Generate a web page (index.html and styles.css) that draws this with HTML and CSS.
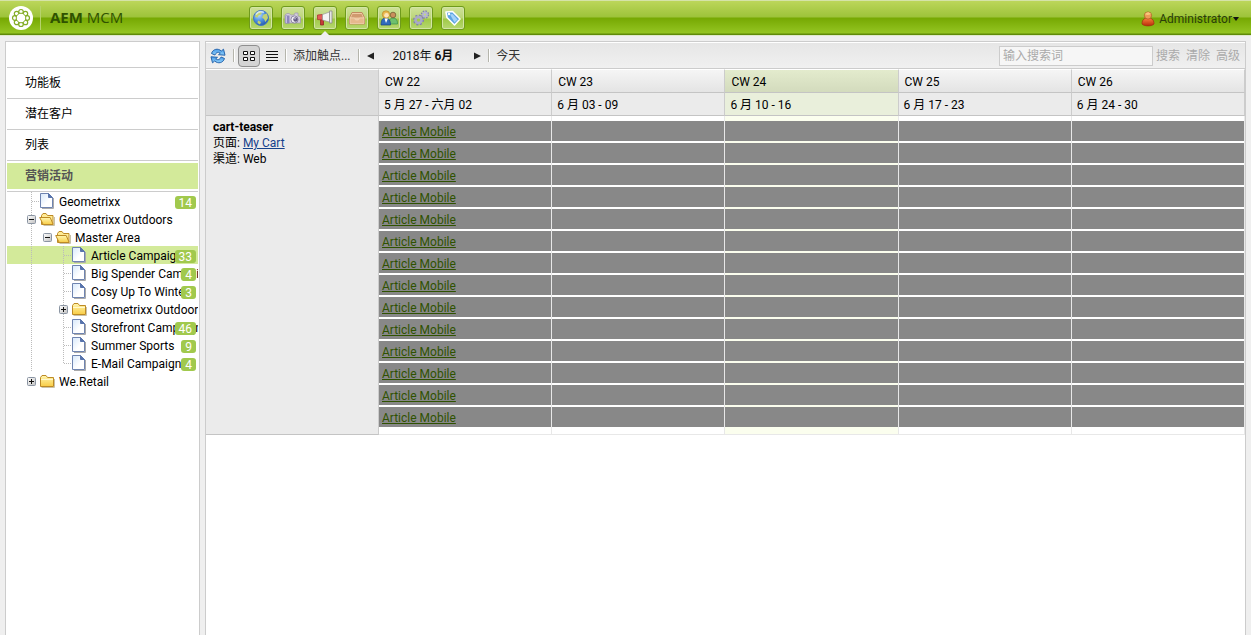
FILE: index.html
```html
<!DOCTYPE html>
<html lang="zh-CN">
<head>
<meta charset="utf-8">
<title>AEM MCM</title>
<link rel="stylesheet" href="styles.css">
</head>
<body>
<svg class="defs" aria-hidden="true">
  <defs>
    <linearGradient id="g-page" x1="0" y1="0" x2="1" y2="1"><stop offset="0" stop-color="#d6e8fb"/><stop offset=".6" stop-color="#fff"/></linearGradient>
    <linearGradient id="g-folder" x1="0" y1="0" x2="0" y2="1"><stop offset="0" stop-color="#fff6b0"/><stop offset="1" stop-color="#f8cc45"/></linearGradient>
    <radialGradient id="g-globe" cx=".35" cy=".3" r=".8"><stop offset="0" stop-color="#b9dcff"/><stop offset=".5" stop-color="#4d91e0"/><stop offset="1" stop-color="#1d4fa4"/></radialGradient>
    <linearGradient id="g-user" x1="0" y1="0" x2="0" y2="1"><stop offset="0" stop-color="#f8843c"/><stop offset="1" stop-color="#b92b0b"/></linearGradient>
    <linearGradient id="g-box" x1="0" y1="0" x2="1" y2="1"><stop offset="0" stop-color="#fff"/><stop offset="1" stop-color="#c0c0c0"/></linearGradient>
    <linearGradient id="g-arrow" x1="0" y1="0" x2="0" y2="1"><stop offset="0" stop-color="#4a9be8"/><stop offset="1" stop-color="#8fd0fa"/></linearGradient>
    <symbol id="page" viewBox="0 0 16 18">
      <path d="M3 16.500h11.500V6" fill="none" stroke="#aaa" stroke-width="1"/>
      <path d="M1.500 1.500h8l4 4v10h-12z" fill="url(#g-page)" stroke="#6f84b0"/>
      <path d="M9.500 1.500v4h4z" fill="#5874ac" stroke="#5874ac"/>
    </symbol>
    <symbol id="folder" viewBox="0 0 16 18">
      <path d="M1.500 14.500V5.500l1.500-2h4l1.500 2h6v9z" fill="url(#g-folder)" stroke="#bd8a25"/>
      <path d="M2 7.500h12" stroke="#fff8cf"/>
      <path d="M2.500 15.500h13V7" fill="none" stroke="#c9c2a8"/>
    </symbol>
    <symbol id="folder-open" viewBox="0 0 16 18">
      <path d="M2.500 14.500V5.500l1.500-2h3l1.500 2h5.500v9z" fill="#ffeb95" stroke="#bd8a25"/>
      <path d="M.700 7.500h10.500l3 7h-10z" fill="url(#g-folder)" stroke="#bd8a25"/>
      <path d="M15.500 7v8.500h-11" fill="none" stroke="#c9c2a8"/>
    </symbol>
    <symbol id="minus" viewBox="0 0 9 9"><rect x=".5" y=".5" width="8" height="8" rx="1" fill="url(#g-box)" stroke="#8b95a3"/><path d="M2 4.500h5" stroke="#111"/></symbol>
    <symbol id="plus" viewBox="0 0 9 9"><rect x=".5" y=".5" width="8" height="8" rx="1" fill="url(#g-box)" stroke="#8b95a3"/><path d="M2 4.500h5M4.500 2v5" stroke="#111"/></symbol>
  </defs>
</svg>

<header class="topbar">
  <a class="logo" href="#" aria-label="AEM">
    <svg width="24" height="24" viewBox="0 0 24 24">
      <circle cx="12" cy="12" r="12" fill="#fff"/>
      <g fill="none" stroke="#83ad25" stroke-width="1.200">
        <circle cx="12" cy="5.800" r="2.300"/><circle cx="16.400" cy="7.600" r="2.300"/><circle cx="18.200" cy="12" r="2.300"/><circle cx="16.400" cy="16.400" r="2.300"/>
        <circle cx="12" cy="18.200" r="2.300"/><circle cx="7.600" cy="16.400" r="2.300"/><circle cx="5.800" cy="12" r="2.300"/><circle cx="7.600" cy="7.600" r="2.300"/>
      </g>
      <circle cx="12" cy="12" r="4.800" fill="#fff" stroke="#83ad25"/>
    </svg>
  </a>
  <h1 class="brand"><b>AEM</b> MCM</h1>
  <nav class="apps">
    <button class="app" aria-label="网站"><svg width="18" height="18" viewBox="0 0 18 18"><circle cx="9" cy="9" r="7.500" fill="url(#g-globe)" stroke="#4577bd"/><path d="M4 5l3-2.500 3 .5-1 2.500-2.500 1-1 2L3 8zM11.500 5.500l3.500-1 1 4.500-2.500 4-1.500-3-2-1.500zM6 11.500l3 1.500-1 2.500-2.500-1.500z" fill="#c2d271"/><path d="M4 5.500c2-3 5-3.500 8-2" fill="none" stroke="#eaf5ff" stroke-width="1.500" opacity=".7"/></svg></button>
    <button class="app" aria-label="数字资产"><svg width="18" height="18" viewBox="0 0 18 18"><path d="M1 6l2-1.500h2L7 6h3l1-2h3v3l2.500 1v6H1z" fill="#d2ccda" stroke="#9d96b0" stroke-width=".7"/><path d="M1.500 6.500h4v8h-4z" fill="#8d85bd"/><path d="M2.500 7v7" stroke="#c4bfe2"/><circle cx="10.500" cy="10.500" r="3.600" fill="#f1eef5" stroke="#8e87a5"/><circle cx="11.500" cy="10.500" r="2.200" fill="#625a80"/><circle cx="11" cy="9.800" r=".8" fill="#c8c2e2"/></svg></button>
    <button class="app app-current" aria-label="营销活动"><svg width="18" height="18" viewBox="0 0 18 18"><path d="M4.500 9.500h3v6.500h-3z" fill="#c63a3a" stroke="#8b2020" stroke-width=".7"/><path d="M1.500 6l5-.5V11l-5-.5z" fill="#e35d58" stroke="#a52c2c" stroke-width=".7"/><path d="M6.500 5.500l7-2.500v10l-7-2z" fill="#f4f4f4" stroke="#999" stroke-width=".7"/><path d="M13.500 2h2.500v12h-2.500z" fill="#e3e3e3" stroke="#8b8b8b" stroke-width=".8"/></svg></button>
    <button class="app" aria-label="收件箱"><svg width="18" height="18" viewBox="0 0 18 18"><path d="M4 3.500h10l2.500 5v6.500h-15V8.500z" fill="#efc9a2" stroke="#c08a60"/><path d="M4.500 5h9l1.500 3.500H3z" fill="#d09a6f"/><path d="M2 9h4.500l1 2h3l1-2H16v5.500H2z" fill="#e6b88d" stroke="#f3d8bb" stroke-width=".6"/></svg></button>
    <button class="app" aria-label="用户"><svg width="18" height="18" viewBox="0 0 18 18"><path d="M9 15c0-4 1-6 4-6s4.500 2 4.500 5v1z" fill="#6ec06e" stroke="#3b9048" stroke-width=".7"/><circle cx="13" cy="6" r="2.800" fill="#c98f5c" stroke="#69552b" stroke-width=".7"/><path d="M1 16c0-5 1.500-7 4.500-7s5 2 5 7z" fill="#316bbd" stroke="#1b417d" stroke-width=".7"/><circle cx="6" cy="5.500" r="3.700" fill="#eab94e" stroke="#b88723" stroke-width=".7"/><circle cx="6.500" cy="6.300" r="2.300" fill="#fce3b8"/><path d="M4.500 9.500l1.500 4.500L8 9.500z" fill="#fff"/></svg></button>
    <button class="app" aria-label="工具"><svg width="18" height="18" viewBox="0 0 18 18" fill="none" stroke="#8383ac"><circle cx="6.500" cy="11" r="4.500" stroke-width="2" stroke-dasharray="2 1.500"/><circle cx="6.500" cy="11" r="3" stroke-width="2.500" stroke="#a9a9c9"/><circle cx="13" cy="5.500" r="3.200" stroke-width="2" stroke-dasharray="1.500 1"/><circle cx="13" cy="5.500" r="2" stroke-width="1.800" stroke="#b5b5d3"/></svg></button>
    <button class="app" aria-label="标记"><svg width="18" height="18" viewBox="0 0 18 18"><path d="M2 3l6.500-.5L16 10l-5.500 6L3 8.500z" fill="#5ba3e3" stroke="#fff" stroke-width="1.600" stroke-linejoin="round"/><path d="M6 5.500l2.500-.5 5 5.500-3 3z" fill="#a4d2f7"/><circle cx="5" cy="5" r="1.200" fill="#fff"/></svg></button>
  </nav>
  <button class="user">
    <svg width="14" height="16" viewBox="0 0 14 16"><path d="M1 13c0-5 3-6 6-6s6 1 6 6c-2 2.500-10 2.500-12 0z" fill="url(#g-user)" stroke="#9e2c10" stroke-width=".7"/><circle cx="7" cy="4.500" r="3.600" fill="#ed9c57" stroke="#ae5622" stroke-width=".7"/><path d="M4 3.500c1-2.500 4-3 6-.5-2 1.200-4 1-6 .5z" fill="#f8c77c"/></svg>
    <span>Administrator</span><svg width="6" height="4" viewBox="0 0 6 4"><path d="M0 0h6L3 4z" fill="#111"/></svg>
  </button>
</header>

<main class="workspace">
  <aside class="sidebar">
    <nav class="menu">
      <a class="menu-item" href="#">功能板</a>
      <a class="menu-item" href="#">潜在客户</a>
      <a class="menu-item" href="#">列表</a>
      <a class="menu-item menu-active" href="#"><span>营销活动</span></a>
    </nav>
    <ul class="tree">
      <li class="node"><i class="guide branch"></i><svg class="icon"><use href="#page"/></svg><a href="#">Geometrixx</a><span class="badge">14</span></li>
      <li class="node"><i class="guide line"><svg class="toggle"><use href="#minus"/></svg></i><svg class="icon"><use href="#folder-open"/></svg><a href="#">Geometrixx Outdoors</a></li>
      <li class="node"><i class="guide line"></i><i class="guide"><svg class="toggle"><use href="#minus"/></svg></i><svg class="icon"><use href="#folder-open"/></svg><a href="#">Master Area</a></li>
      <li class="node selected"><i class="guide line"></i><i class="guide"></i><i class="guide branch"></i><svg class="icon"><use href="#page"/></svg><a href="#">Article Campaigns</a><span class="badge">33</span></li>
      <li class="node"><i class="guide line"></i><i class="guide"></i><i class="guide branch"></i><svg class="icon"><use href="#page"/></svg><a href="#">Big Spender Campaign</a><span class="badge">4</span></li>
      <li class="node"><i class="guide line"></i><i class="guide"></i><i class="guide branch"></i><svg class="icon"><use href="#page"/></svg><a href="#">Cosy Up To Winter</a><span class="badge">3</span></li>
      <li class="node"><i class="guide line"></i><i class="guide"></i><i class="guide line"><svg class="toggle"><use href="#plus"/></svg></i><svg class="icon"><use href="#folder"/></svg><a href="#">Geometrixx Outdoors</a></li>
      <li class="node"><i class="guide line"></i><i class="guide"></i><i class="guide branch"></i><svg class="icon"><use href="#page"/></svg><a href="#">Storefront Campaigner</a><span class="badge">46</span></li>
      <li class="node"><i class="guide line"></i><i class="guide"></i><i class="guide branch"></i><svg class="icon"><use href="#page"/></svg><a href="#">Summer Sports</a><span class="badge">9</span></li>
      <li class="node"><i class="guide line"></i><i class="guide"></i><i class="guide branch end"></i><svg class="icon"><use href="#page"/></svg><a href="#">E-Mail Campaigns</a><span class="badge">4</span></li>
      <li class="node"><i class="guide"><svg class="toggle"><use href="#plus"/></svg></i><svg class="icon"><use href="#folder"/></svg><a href="#">We.Retail</a></li>
    </ul>
  </aside>

  <section class="content">
    <div class="toolbar">
      <button class="tool refresh" aria-label="刷新"><svg width="16" height="16" viewBox="0 0 16 16" stroke-linejoin="round"><path d="M1.500 5.500C3 .800 8 0 11.300 3L13.500 1.200l1.500 6-6.500-.5 1.800-1.600C8 3.500 6 4.500 5 7z" fill="url(#g-arrow)" stroke="#2564ad"/><path d="M14.500 10.500C13 15.200 8 16 4.700 13l-2.200 1.800L1 8.800l6.500.5-1.800 1.600C8 12.500 10 11.500 11 9z" fill="url(#g-arrow)" stroke="#2564ad"/></svg></button>
      <span class="sep"></span>
      <button class="tool pressed" aria-label="日历视图"><svg width="12" height="12" viewBox="0 0 12 12" fill="#fff" stroke="#111"><path d="M.5 1.500h4v3h-4zM7.500 1.500h4v3h-4zM.5 7.500h4v3h-4zM7.500 7.500h4v3h-4z"/></svg></button>
      <button class="tool list" aria-label="列表视图"><svg width="12" height="12" viewBox="0 0 12 12" stroke="#111"><path d="M0 1.500h12M0 4.500h12M0 7.500h12M0 10.500h12"/></svg></button>
      <span class="sep"></span>
      <button class="tool">添加触点...</button>
      <span class="sep"></span>
      <button class="tool arrow" aria-label="上一月"><svg width="7" height="8" viewBox="0 0 7 8"><path d="M7 .5v7L0 4z" fill="#222"/></svg></button>
      <span class="month">2018年 <b>6月</b></span>
      <button class="tool arrow" aria-label="下一月"><svg width="7" height="8" viewBox="0 0 7 8"><path d="M0 .5v7L7 4z" fill="#222"/></svg></button>
      <span class="sep"></span>
      <button class="tool">今天</button>
      <form class="search">
        <input type="text" placeholder="输入搜索词" aria-label="输入搜索词">
        <button type="button" disabled>搜索</button>
        <button type="button" disabled>清除</button>
        <button type="button" disabled>高级</button>
      </form>
    </div>

    <table class="calendar">
      <colgroup><col class="col-name"><col><col><col class="current"><col><col></colgroup>
      <thead>
        <tr class="weeks"><th class="corner" rowspan="2"></th><th>CW 22</th><th>CW 23</th><th class="now">CW 24</th><th>CW 25</th><th>CW 26</th></tr>
        <tr class="dates"><th>5 月 27 - 六月 02</th><th>6 月 03 - 09</th><th class="now">6 月 10 - 16</th><th>6 月 17 - 23</th><th>6 月 24 - 30</th></tr>
      </thead>
      <tbody>
        <tr>
          <th class="place" rowspan="14"><b>cart-teaser</b><br>页面: <a href="#">My Cart</a><br>渠道: Web</th>
          <td><div class="bar"><a href="#">Article Mobile</a></div></td><td><div class="bar"></div></td><td><div class="bar"></div></td><td><div class="bar"></div></td><td><div class="bar"></div></td>
        </tr>
        <tr><td><div class="bar"><a href="#">Article Mobile</a></div></td><td><div class="bar"></div></td><td><div class="bar"></div></td><td><div class="bar"></div></td><td><div class="bar"></div></td></tr>
        <tr><td><div class="bar"><a href="#">Article Mobile</a></div></td><td><div class="bar"></div></td><td><div class="bar"></div></td><td><div class="bar"></div></td><td><div class="bar"></div></td></tr>
        <tr><td><div class="bar"><a href="#">Article Mobile</a></div></td><td><div class="bar"></div></td><td><div class="bar"></div></td><td><div class="bar"></div></td><td><div class="bar"></div></td></tr>
        <tr><td><div class="bar"><a href="#">Article Mobile</a></div></td><td><div class="bar"></div></td><td><div class="bar"></div></td><td><div class="bar"></div></td><td><div class="bar"></div></td></tr>
        <tr><td><div class="bar"><a href="#">Article Mobile</a></div></td><td><div class="bar"></div></td><td><div class="bar"></div></td><td><div class="bar"></div></td><td><div class="bar"></div></td></tr>
        <tr><td><div class="bar"><a href="#">Article Mobile</a></div></td><td><div class="bar"></div></td><td><div class="bar"></div></td><td><div class="bar"></div></td><td><div class="bar"></div></td></tr>
        <tr><td><div class="bar"><a href="#">Article Mobile</a></div></td><td><div class="bar"></div></td><td><div class="bar"></div></td><td><div class="bar"></div></td><td><div class="bar"></div></td></tr>
        <tr><td><div class="bar"><a href="#">Article Mobile</a></div></td><td><div class="bar"></div></td><td><div class="bar"></div></td><td><div class="bar"></div></td><td><div class="bar"></div></td></tr>
        <tr><td><div class="bar"><a href="#">Article Mobile</a></div></td><td><div class="bar"></div></td><td><div class="bar"></div></td><td><div class="bar"></div></td><td><div class="bar"></div></td></tr>
        <tr><td><div class="bar"><a href="#">Article Mobile</a></div></td><td><div class="bar"></div></td><td><div class="bar"></div></td><td><div class="bar"></div></td><td><div class="bar"></div></td></tr>
        <tr><td><div class="bar"><a href="#">Article Mobile</a></div></td><td><div class="bar"></div></td><td><div class="bar"></div></td><td><div class="bar"></div></td><td><div class="bar"></div></td></tr>
        <tr><td><div class="bar"><a href="#">Article Mobile</a></div></td><td><div class="bar"></div></td><td><div class="bar"></div></td><td><div class="bar"></div></td><td><div class="bar"></div></td></tr>
        <tr><td><div class="bar"><a href="#">Article Mobile</a></div></td><td><div class="bar"></div></td><td><div class="bar"></div></td><td><div class="bar"></div></td><td><div class="bar"></div></td></tr>
      </tbody>
    </table>
  </section>
</main>
</body>
</html>
```
FILE: styles.css
```css
* { box-sizing: border-box; }

body {
  margin: 0;
  height: 100vh;
  display: flex;
  flex-direction: column;
  overflow: hidden;
  background: #efefef;
  color: #000;
  font: 12px/16px Roboto, "Noto Sans CJK SC", sans-serif;
}

button, input {
  margin: 0;
  padding: 0;
  border: 0;
  background: none;
  color: inherit;
  font: inherit;
}

a { color: inherit; text-decoration: none; }
svg { display: block; flex: none; }
.defs { position: absolute; width: 0; height: 0; }

/* Top bar */
.topbar {
  flex: none;
  display: flex;
  align-items: center;
  height: 36px;
  padding: 0 12px 0 9px;
  border-top: 1px solid #d5e3a8;
  border-bottom: 1px solid #dfe8cc;
  background: linear-gradient(#bcd65a 0, #9dc33a 16px, #76a802 17px, #94c522 32px, #5f8a08 33px, #5f8a08 34px);
}

.brand {
  width: 209px;
  height: 24px;
  margin: 0 0 0 7px;
  padding-left: 9px;
  border-left: 1px solid #b6d26c;
  color: #2f5200;
  font: 15px/22px "Open Sans", "Noto Sans", sans-serif;
}

.apps { display: flex; gap: 8px; flex: 1; }

.app {
  position: relative;
  display: flex;
  align-items: center;
  justify-content: center;
  width: 24px;
  height: 24px;
  border: 1px solid #6f9a1c;
  border-radius: 3px;
  background: linear-gradient(#cfe19a 0, #bcd679 11px, #a0c946 12px, #b7d873);
  box-shadow: inset 0 0 0 1px #d3e5a5;
}

.app-current::after {
  content: "";
  position: absolute;
  top: 24px;
  left: 6px;
  border: 5px solid transparent;
  border-top: 0;
  border-bottom-color: #efefef;
}

.user {
  display: flex;
  align-items: center;
  gap: 4px;
  padding-top: 2px;
  color: #2a3d0a;
}

.user span + svg { margin-left: -3px; }

/* Panels */
.workspace {
  flex: 1;
  display: flex;
  gap: 5px;
  min-height: 0;
  padding: 5px 5px 0;
}

.sidebar {
  flex: none;
  width: 195px;
  padding: 0 1px;
  border: 1px solid #ccc;
  border-bottom: 0;
  background: #fff;
}

.content {
  flex: 1;
  min-width: 0;
  border: 1px solid #ccc;
  border-bottom: 0;
  background: #fff;
}

/* Side menu */
.menu { padding-top: 25px; border-bottom: 1px solid #ccc; }

.menu-item {
  display: block;
  height: 31px;
  padding: 7px 18px;
  border-top: 1px solid #ccc;
}

.menu-active {
  padding: 2px 0;
  color: #555;
  font-weight: bold;
}

.menu-active span {
  display: block;
  height: 26px;
  padding: 5px 18px;
  background: #d3ea9a;
}

/* Campaign tree */
.tree { margin: 0; padding: 0; list-style: none; }

.node {
  position: relative;
  display: flex;
  align-items: center;
  height: 18px;
  padding-left: 17px;
  overflow: hidden;
  white-space: nowrap;
}

.selected { background: #d3ea9a; }
.icon { width: 16px; height: 18px; margin: 0 3px 0 -1px; }
.node a { padding: 2px 0 0 1px; }

.guide {
  flex: none;
  display: flex;
  align-items: center;
  width: 16px;
  height: 18px;
  padding-left: 3px;
}

.line {
  background: repeating-linear-gradient(#bbb 0 1px, transparent 1px 2px) 7px 0 / 1px 18px no-repeat;
}

.branch {
  background:
    repeating-linear-gradient(#bbb 0 1px, transparent 1px 2px) 7px 0 / 1px 18px no-repeat,
    repeating-linear-gradient(90deg, #bbb 0 1px, transparent 1px 2px) 8px 9px / 8px 1px no-repeat;
}

.branch.end {
  background:
    repeating-linear-gradient(#bbb 0 1px, transparent 1px 2px) 7px 0 / 1px 10px no-repeat,
    repeating-linear-gradient(90deg, #bbb 0 1px, transparent 1px 2px) 8px 9px / 8px 1px no-repeat;
}

.toggle { width: 9px; height: 9px; }

.badge {
  position: absolute;
  top: 4px;
  right: 2px;
  height: 13px;
  padding: 0 4px;
  border-radius: 3px;
  background: #a1c94d;
  color: #fff;
  line-height: 14px;
}

/* Toolbar */
.toolbar {
  display: flex;
  align-items: center;
  height: 27px;
  padding: 0 5px 0 4px;
  border-top: 1px solid #fff;
  border-bottom: 1px solid #ccc;
  background: linear-gradient(#e6e6e6, #f0f0f0);
  color: #333;
}

.sep {
  width: 2px;
  height: 13px;
  margin: 0 6px 0 7px;
  border-left: 1px solid #b5b5ac;
  border-right: 1px solid #fff;
}

.refresh + .sep { margin-right: 3px; }

.pressed {
  display: grid;
  place-items: center;
  width: 22px;
  height: 22px;
  border: 1px solid #8f8f8f;
  border-radius: 4px;
  background: #d4d4d4;
}

.list { padding-left: 6px; }
.month { padding: 0 19px; color: #111; }
.month + .arrow { margin-left: 2px; }
.sep + .arrow { margin-left: 1px; }

.search { display: flex; align-items: center; gap: 6px; margin-left: auto; color: #aaa; }

.search input {
  width: 154px;
  height: 20px;
  margin-right: -3px;
  padding: 2px 3px;
  border: 1px solid #ccc;
  background: #f6f6f6;
}

.search input::placeholder { color: #aaa; }

/* Calendar */
.calendar {
  width: 100%;
  border-collapse: separate;
  border-spacing: 0;
  table-layout: fixed;
}

.col-name { width: 173px; }
.current { background: #fbfeee; }

.calendar th {
  padding: 2px 6px 0;
  border-right: 1px solid #ccc;
  border-bottom: 1px solid #c4c4c4;
  background: #ebebeb;
  font-weight: normal;
  text-align: left;
}

.weeks th { height: 24px; border-top: 1px solid #fff; background: linear-gradient(#f5f5f5, #e4e4e4); }
.dates th { height: 23px; padding-left: 5px; }
.calendar .corner { background: #ddd; }
.weeks .now { background: linear-gradient(#e3ebcd, #d3dbbd); }
.dates .now { background: #e9efdb; }

.calendar .place { padding: 3px 7px; vertical-align: top; }
.place a { color: #15428b; text-decoration: underline; }

.calendar td { padding: 0 0 2px; border-right: 1px solid #e8e8e8; }
tbody tr:first-child td { padding-top: 5px; }
tbody tr:last-child td { padding-bottom: 7px; border-bottom: 1px solid #e8e8e8; }

.bar { height: 20px; padding: 3px 3px 1px; background: #888; color: #2f5200; }
.bar a { text-decoration: underline; }
```
